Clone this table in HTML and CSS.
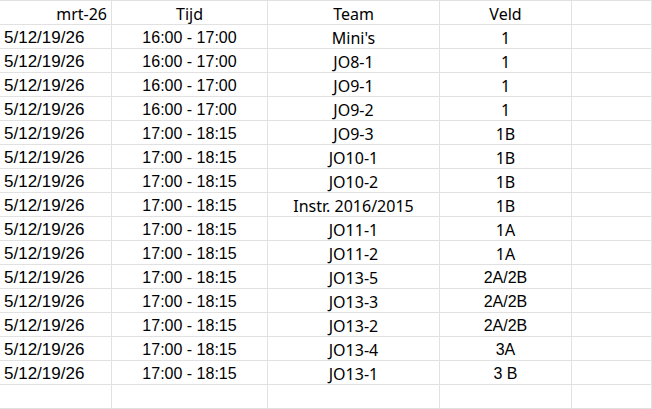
FILE: index.html
```html
<!DOCTYPE html>
<html lang="nl">
<head>
<meta charset="utf-8">
<title>Schema</title>
<link rel="stylesheet" href="styles.css">
</head>
<body>
<div class="sheet">
  <div class="cell right apt">mrt-26</div><div class="cell center apt">Tijd</div><div class="cell center apt">Team</div><div class="cell center apt">Veld</div><div class="cell"></div>

  <div class="cell ar date">5/12/19/26</div><div class="cell center ar">16:00 - 17:00</div><div class="cell center apt">Mini's</div><div class="cell center apt">1</div><div class="cell"></div>
  <div class="cell ar date">5/12/19/26</div><div class="cell center ar">16:00 - 17:00</div><div class="cell center apt">JO8-1</div><div class="cell center apt">1</div><div class="cell"></div>
  <div class="cell ar date">5/12/19/26</div><div class="cell center ar">16:00 - 17:00</div><div class="cell center apt">JO9-1</div><div class="cell center apt">1</div><div class="cell"></div>
  <div class="cell ar date">5/12/19/26</div><div class="cell center ar">16:00 - 17:00</div><div class="cell center apt">JO9-2</div><div class="cell center apt">1</div><div class="cell"></div>
  <div class="cell ar date">5/12/19/26</div><div class="cell center ar">17:00 - 18:15</div><div class="cell center apt">JO9-3</div><div class="cell center apt">1B</div><div class="cell"></div>
  <div class="cell ar date">5/12/19/26</div><div class="cell center ar">17:00 - 18:15</div><div class="cell center apt">JO10-1</div><div class="cell center apt">1B</div><div class="cell"></div>
  <div class="cell ar date">5/12/19/26</div><div class="cell center ar">17:00 - 18:15</div><div class="cell center apt">JO10-2</div><div class="cell center apt">1B</div><div class="cell"></div>
  <div class="cell ar date">5/12/19/26</div><div class="cell center ar">17:00 - 18:15</div><div class="cell center apt">Instr. 2016/2015</div><div class="cell center apt">1B</div><div class="cell"></div>
  <div class="cell ar date">5/12/19/26</div><div class="cell center ar">17:00 - 18:15</div><div class="cell center apt">JO11-1</div><div class="cell center apt">1A</div><div class="cell"></div>
  <div class="cell ar date">5/12/19/26</div><div class="cell center ar">17:00 - 18:15</div><div class="cell center apt">JO11-2</div><div class="cell center apt">1A</div><div class="cell"></div>
  <div class="cell ar date">5/12/19/26</div><div class="cell center ar">17:00 - 18:15</div><div class="cell center apt">JO13-5</div><div class="cell center ar">2A/2B</div><div class="cell"></div>
  <div class="cell ar date">5/12/19/26</div><div class="cell center ar">17:00 - 18:15</div><div class="cell center apt">JO13-3</div><div class="cell center ar">2A/2B</div><div class="cell"></div>
  <div class="cell ar date">5/12/19/26</div><div class="cell center ar">17:00 - 18:15</div><div class="cell center apt">JO13-2</div><div class="cell center ar">2A/2B</div><div class="cell"></div>
  <div class="cell ar date">5/12/19/26</div><div class="cell center ar">17:00 - 18:15</div><div class="cell center apt">JO13-4</div><div class="cell center ar">3A</div><div class="cell"></div>
  <div class="cell ar date">5/12/19/26</div><div class="cell center ar">17:00 - 18:15</div><div class="cell center apt">JO13-1</div><div class="cell center ar">3 B</div><div class="cell"></div>

  <div class="cell"></div><div class="cell"></div><div class="cell"></div><div class="cell"></div><div class="cell"></div>
</div>
</body>
</html>
```

FILE: styles.css
```css
html, body {
  margin: 0;
  padding: 0;
  background: #ffffff;
}

.sheet {
  display: grid;
  grid-template-columns: 112px 156px 172px 132px 80px;
  grid-auto-rows: 24px;
  border-top: 1px solid #e1e1e1;
  width: 652px;
}

.cell {
  box-sizing: border-box;
  border-right: 1px solid #e1e1e1;
  border-bottom: 1px solid #e1e1e1;
  display: flex;
  align-items: flex-end;
  padding: 0 4px 1px 4px;
  color: #000000;
  font-size: 16px;
  line-height: 18px;
  white-space: nowrap;
  overflow: hidden;
}

.ar {
  font-family: "Liberation Sans", Arial, sans-serif;
}

.date {
  font-size: 17px;
}

.apt {
  font-family: "Noto Sans", "Open Sans", sans-serif;
}

.center {
  justify-content: center;
}

.right {
  justify-content: flex-end;
}
```
